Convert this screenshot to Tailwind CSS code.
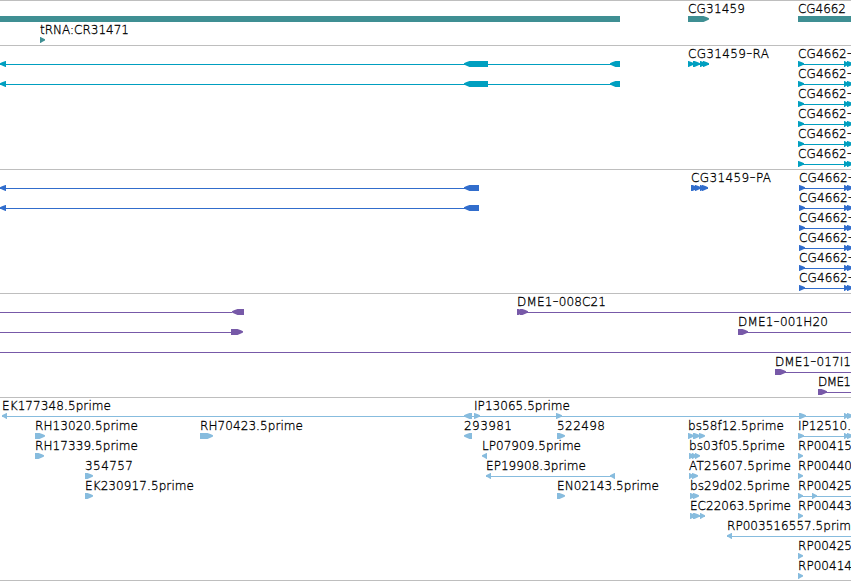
<!DOCTYPE html>
<html lang="en">
<head>
  <meta charset="UTF-8" />
  <meta name="viewport" content="width=device-width, initial-scale=1.0"/>
  <title>Genome Browser</title>
  <script src="https://cdn.jsdelivr.net/npm/@tailwindcss/browser@4"></script>
</head>
<body class="bg-white overflow-hidden">
  <main id="tracks" class="flex flex-col w-[851px] h-[581px] overflow-hidden border-b border-[#bebebe] font-['DejaVu_Sans',sans-serif] font-extralight text-[12px]"></main>

  <script>
    // labels: [text, x, width]   lines: [x1, x2]
    // shapes: [x1, x2, direction], ">" and "<" are pointed, "=" is a plain bar
    const cg = (x) => ({ labels: [["CG4662-", x, 55]], lines: [[x, 851]], shapes: [[x, x + 6, ">"], [844, 849, ">"], [847, 853, ">"]] });
    const est = (text) => ({ labels: [[text, 798, 54]], shapes: [[798, 803, ">"]] });
    const ra = { lines: [[0, 620]], shapes: [[0, 6, "<"], [464, 488, "<"], [610, 620, "<"]] };
    const pa = { lines: [[0, 479]], shapes: [[0, 6, "<"], [464, 479, "<"]] };

    const join = (...rows) => ({
      labels: rows.flatMap((r) => r.labels || []),
      lines: rows.flatMap((r) => r.lines || []),
      shapes: rows.flatMap((r) => r.shapes || []),
    });

    const tracks = [
      { color: "text-[#3f8f93]", style: "h-[45px]", rows: [
        { labels: [["CG31459", 688, 57], ["CG4662", 798, 48]], shapes: [[0, 620, "="], [688, 709, ">"], [798, 851, "="]] },
        { drop: true, labels: [["tRNA:CR31471", 40, 89]], shapes: [[40, 45, ">"]] },
      ]},
      { color: "text-[#009fc0]", style: "h-[124px]", rows: [
        join(ra, { labels: [["CG31459-RA", 688, 81]], shapes: [[688, 694, ">"], [693, 700, ">"], [700, 706, ">"], [703, 709, ">"]] }, { lines: [[688, 709]] }, cg(798)),
        join(ra, cg(798)), cg(798), cg(798), cg(798), cg(798),
      ]},
      { color: "text-[#316dcc]", style: "h-[124px]", rows: [
        join(pa, { labels: [["CG31459-PA", 691, 80]], shapes: [[691, 698, ">"], [695, 701, ">"], [700, 706, ">"], [702, 708, ">"]] }, { lines: [[691, 708]] }, cg(799)),
        join(pa, cg(799)), cg(799), cg(799), cg(799), cg(799),
      ]},
      { color: "text-[#7759a8]", style: "h-[104px]", rows: [
        { labels: [["DME1-008C21", 517, 89]], lines: [[0, 232], [517, 851]], shapes: [[232, 244, "<"], [517, 524, ">"], [520, 528, ">"]] },
        { labels: [["DME1-001H20", 738, 90]], lines: [[0, 232], [738, 851]], shapes: [[231, 243, ">"], [738, 748, ">"]] },
        { lines: [[0, 851]] },
        { labels: [["DME1-017I1", 775, 76]], lines: [[775, 851]], shapes: [[775, 786, ">"]] },
        { labels: [["DME1", 818, 33]], lines: [[818, 851]], shapes: [[818, 827, ">"]] },
      ]},
      { color: "text-[#87bcde]", style: "h-[183px]", rows: [
        { labels: [["EK177348.5prime", 2, 109], ["IP13065.5prime", 474, 96]], lines: [[2, 851]], shapes: [[2, 7, "<"], [464, 472, "<"], [474, 480, ">"], [556, 562, ">"], [799, 806, ">"], [844, 849, ">"], [847, 853, ">"]] },
        { labels: [["RH13020.5prime", 35, 103], ["RH70423.5prime", 200, 103], ["293981", 464, 48], ["522498", 557, 48], ["bs58f12.5prime", 688, 96], ["IP12510.", 798, 53]], lines: [[798, 851]], shapes: [[35, 45, ">"], [200, 213, ">"], [464, 472, "<"], [557, 565, ">"], [688, 694, ">"], [693, 700, ">"], [699, 705, ">"], [798, 804, ">"], [844, 849, ">"], [847, 853, ">"]] },
        join({ labels: [["RH17339.5prime", 35, 103], ["LP07909.5prime", 482, 99], ["bs03f05.5prime", 689, 96]], shapes: [[35, 44, ">"], [482, 487, "<"], [689, 695, ">"], [692, 697, ">"], [695, 700, ">"]] }, est("RP00415")),
        join({ labels: [["354757", 85, 48], ["EP19908.3prime", 486, 100], ["AT25607.5prime", 689, 102]], lines: [[486, 615]], shapes: [[85, 93, ">"], [486, 491, "<"], [610, 615, "<"], [689, 694, ">"], [692, 698, ">"]] }, est("RP00440")),
        join({ labels: [["EK230917.5prime", 85, 109], ["EN02143.5prime", 557, 102], ["bs29d02.5prime", 690, 100]], lines: [[798, 851]], shapes: [[85, 93, ">"], [557, 565, ">"], [690, 696, ">"], [693, 699, ">"], [812, 817, ">"]] }, est("RP00425")),
        join({ labels: [["EC22063.5prime", 690, 101]], lines: [[690, 705]], shapes: [[690, 696, ">"], [693, 700, ">"], [700, 705, ">"]] }, est("RP00443")),
        { labels: [["RP003516557.5prim", 727, 124]], lines: [[727, 851]], shapes: [[727, 732, "<"]] },
        est("RP00425"),
        est("RP00414"),
      ]},
    ];

    function shape([a, b, dir]) {
      if (dir === "=") return `<rect x="${a}" y="15" width="${b - a}" height="6"/>`;
      const s = dir === ">" ? -1 : 1;
      const tip = dir === ">" ? b : a;
      const back = dir === ">" ? a : b;
      const head = Math.min(b - a, 6);
      const neck = tip + s * (head - 0.5);
      const mid = tip + s * 2;
      return `<polygon points="${tip},17.3 ${mid},16.3 ${neck},15 ${back},15 ${back},21 ${neck},21 ${mid},19.4 ${tip},18.5"/>`;
    }

    // hyphens are set larger, so that they come out as wide as the digits
    function row(r) {
      const lines = (r.lines || []).map(([a, b]) => `<rect x="${a}" y="18" width="${b - a}" height="1" shape-rendering="crispEdges"/>`);
      const shapes = (r.shapes || []).map(shape);
      const labels = (r.labels || []).map(([t, x, w]) => `<text x="${x}" y="12" textLength="${w}" class="fill-black stroke-black stroke-[0.3px]">${t.replace("-", '<tspan class="text-[17px]">-</tspan>')}</text>`);
      return `<svg class="block shrink-0 w-full h-5 overflow-visible fill-current ${r.drop ? "mt-px" : ""}">${lines.join("")}${shapes.join("")}${labels.join("")}</svg>`;
    }

    document.getElementById("tracks").innerHTML = tracks.map((t) =>
      `<section class="flex flex-col shrink-0 border-t border-t-[#bebebe] ${t.style} ${t.color}">${t.rows.map(row).join("")}</section>`
    ).join("");
  </script>
</body>
</html>
